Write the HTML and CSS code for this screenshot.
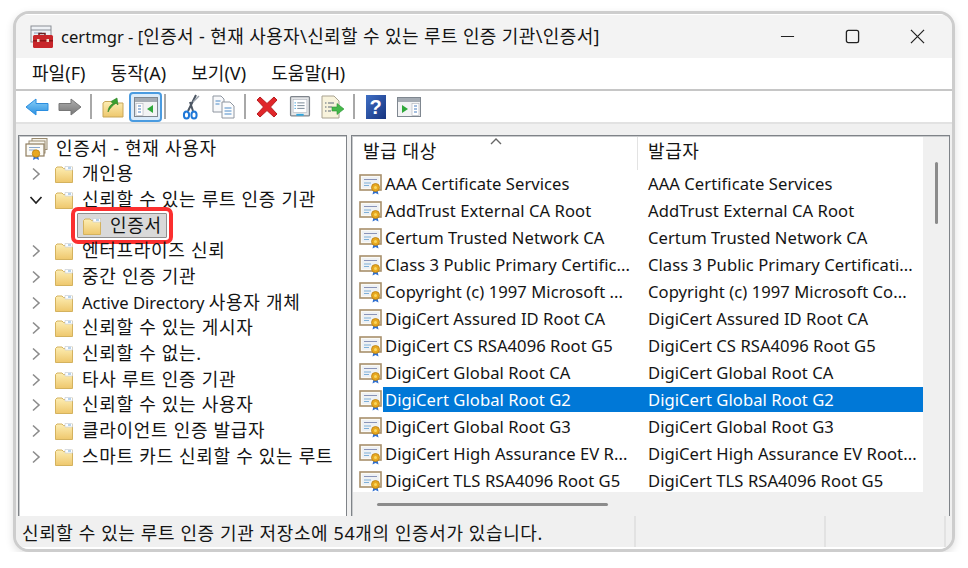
FILE: index.html
```html
<!DOCTYPE html>
<html>

<head lang="ko">
    <meta charset="UTF-8">
    <title>certmgr</title>
    <link rel="stylesheet" href="styles.css">
</head>

<body>
    <!-- 아이콘 모음 -->
    <svg class="icon-defs" xmlns="http://www.w3.org/2000/svg">
        <defs>
            <linearGradient id="folderFill" x1="0" y1="0" x2="0" y2="1">
                <stop offset="0" stop-color="#fdeeb4" />
                <stop offset="1" stop-color="#eec76c" />
            </linearGradient>
            <linearGradient id="backFill" x1="0" y1="0" x2="0" y2="1">
                <stop offset="0" stop-color="#8ad0f8" />
                <stop offset="1" stop-color="#2a8fe0" />
            </linearGradient>
            <linearGradient id="fwdFill" x1="0" y1="0" x2="0" y2="1">
                <stop offset="0" stop-color="#b0b0b0" />
                <stop offset="1" stop-color="#757575" />
            </linearGradient>
            <linearGradient id="helpFill" x1="0" y1="0" x2="1" y2="1">
                <stop offset="0" stop-color="#3f6fc4" />
                <stop offset="1" stop-color="#16337f" />
            </linearGradient>
            <symbol id="folder" viewBox="0 0 20 20">
                <path d="M1.500 18.500V4.500L3 3h5l1.500 1.500h7L18.500 3v15.500z" fill="url(#folderFill)" stroke="#d4b25e" />
                <path d="M11 2.500h6.500l1 1V6H11z" fill="#fff" stroke="#c9cfd6" stroke-width=".7" />
                <path d="M14 3.500h3v1h-3z" fill="#6ea6d8" />
            </symbol>
            <symbol id="cert" viewBox="0 0 24 22">
                <rect x="1" y="2" width="21" height="15" fill="#fbfaf6" stroke="#a8906c" stroke-width="1.600" />
                <rect x="3" y="4" width="17" height="11" fill="#eef1f4" />
                <path d="M5 6.500h13" stroke="#8a94b8" />
                <path d="M5 10h7M5 12.500h5" stroke="#7fb0d8" />
                <path d="M14.500 17l-1 4.500 3-1.500 3 1.500-1-4.500z" fill="#2f6fd0" />
                <circle cx="16.500" cy="14.500" r="4" fill="#e8a820" stroke="#b97f10" stroke-width=".8" />
                <circle cx="16.500" cy="14.500" r="1.500" fill="#f8d860" />
            </symbol>
            <symbol id="certs" viewBox="0 0 24 24">
                <rect x="7" y="1.500" width="15" height="11" fill="#f6f3ea" stroke="#9a8b70" />
                <rect x="4" y="4" width="16" height="12" fill="#f8f6ef" stroke="#9a8b70" />
                <rect x="1" y="7" width="18" height="12" fill="#fbfaf6" stroke="#8f7d5f" stroke-width="1.200" />
                <path d="M4 10.500h11M4 13h6" stroke="#8aa8cc" />
                <path d="M9 18l-1 5 3-1.500 3 1.500-1-5z" fill="#2f6fd0" />
                <circle cx="11" cy="16.500" r="3.700" fill="#e8a820" stroke="#b97f10" stroke-width=".8" />
            </symbol>
            <symbol id="toolbox" viewBox="0 0 24 24">
                <rect x="1" y="1" width="20" height="16" fill="#eef1f5" stroke="#8b8f96" />
                <path d="M1 5h20" stroke="#8b8f96" />
                <path d="M4 8h8M4 11h5" stroke="#8aa0bc" />
                <path d="M9 10V8.500h6V10" fill="none" stroke="#6a2020" stroke-width="1.500" />
                <rect x="3" y="10" width="20" height="13" rx="1.500" fill="#c8262a" />
                <rect x="3" y="15" width="20" height="1.500" fill="#8e1416" />
                <rect x="7" y="14" width="2.500" height="3" fill="#f0d8c8" />
                <rect x="16.500" y="14" width="2.500" height="3" fill="#f0d8c8" />
            </symbol>
            <symbol id="back" viewBox="0 0 24 18">
                <path d="M1 9l10-8v4.500h12v7H11V17z" fill="url(#backFill)" stroke="#2a8ee0" stroke-linejoin="round" />
            </symbol>
            <symbol id="fwd" viewBox="0 0 24 18">
                <path d="M23 9l-10-8v4.500H1v7h12V17z" fill="url(#fwdFill)" stroke="#777" stroke-linejoin="round" />
            </symbol>
            <symbol id="upFolder" viewBox="0 0 22 22">
                <path d="M1 21V7l2-1.500h6l1.500 1.500H21v14z" fill="url(#folderFill)" stroke="#c9a758" />
                <path d="M6 16c0-4 2-7 5-8.500L9 5.500 15 2l1 7-2-1.800C11 9 8 12 6 16z" fill="#3aa02e" stroke="#2a8022" stroke-width=".6" />
            </symbol>
            <symbol id="paneHide" viewBox="0 0 24 20">
                <rect x=".5" y=".5" width="23" height="19" fill="#f2f3f4" stroke="#7f8790" />
                <rect x="1" y="1" width="22" height="4" fill="#a4abb3" />
                <rect x="2" y="6.500" width="7" height="12" fill="#fff" stroke="#aab0b8" stroke-width=".6" />
                <path d="M4 9h3M4 12h3M4 15h3" stroke="#4a7fc0" stroke-width="1.200" />
                <path d="M19 8v8l-6-4z" fill="#2fa83a" />
            </symbol>
            <symbol id="paneShow" viewBox="0 0 24 20">
                <rect x=".5" y=".5" width="23" height="19" fill="#f2f3f4" stroke="#7f8790" />
                <rect x="1" y="1" width="22" height="4" fill="#a4abb3" />
                <rect x="15" y="6.500" width="7" height="12" fill="#fff" stroke="#aab0b8" stroke-width=".6" />
                <path d="M17 9h3M17 12h3M17 15h3" stroke="#4a7fc0" stroke-width="1.200" />
                <path d="M5 8v8l6-4z" fill="#2fa83a" />
            </symbol>
            <symbol id="scissors" viewBox="0 0 20 26">
                <path d="M7 17L15 1M12 17L9 8" stroke="#4c5663" stroke-width="2" />
                <path d="M18 2l-6 6" stroke="#9aa2ac" stroke-width="1.500" />
                <ellipse cx="5.500" cy="21" rx="2.600" ry="3.600" fill="none" stroke="#1f78d8" stroke-width="2" />
                <ellipse cx="13" cy="21" rx="2.600" ry="3.600" fill="none" stroke="#1f78d8" stroke-width="2" />
            </symbol>
            <symbol id="copy" viewBox="0 0 24 24">
                <path d="M1 1h8l3 3v13H1z" fill="#f7f8fa" stroke="#8f96a0" />
                <path d="M10 7h8l4 4v12H10z" fill="#fbfcfd" stroke="#8f96a0" />
                <path d="M3.500 6h5M3.500 9h4M12.500 13h7M12.500 16h7M12.500 19h7" stroke="#4a8ac8" />
            </symbol>
            <symbol id="remove" viewBox="0 0 24 24">
                <path d="M2 5l3-3 7 6.500L19 2l3 3-6.500 7 6.500 7-3 3-7-6.500L5 22l-3-3 6.500-7z" fill="#e0262a" stroke="#b81c20" stroke-linejoin="round" />
            </symbol>
            <symbol id="props" viewBox="0 0 22 24">
                <rect x=".7" y=".7" width="20.600" height="21" rx="1" fill="#e4e6e8" stroke="#7f858c" stroke-width="1.400" />
                <rect x="3.500" y="4" width="15" height="14" fill="#fff" stroke="#aab0b8" stroke-width=".6" />
                <path d="M8 7.500h8M8 10.500h8M8 13.500h8" stroke="#70808e" />
                <path d="M5 7.500h1.500M5 10.500h1.500M5 13.500h1.500" stroke="#2f9ad8" />
                <rect x="7" y="19.500" width="8" height="2" fill="#2fa8e0" />
            </symbol>
            <symbol id="export" viewBox="0 0 24 24">
                <path d="M1 1h12l5 5v17H1z" fill="#f8f3dc" stroke="#a8a290" />
                <path d="M4 8h1.500M7 8h6M4 12h1.500M7 12h4M4 16h1.500M7 16h3" stroke="#5a6678" />
                <path d="M11 12h5V8.500l7 5.500-7 5.500V16h-5z" fill="#45b84a" stroke="#2c9434" stroke-width=".6" />
            </symbol>
            <symbol id="chevRight" viewBox="0 0 12 14">
                <path d="M3 1.500L9 7l-6 5.500" fill="none" stroke="#8c8c8c" stroke-width="1.600" />
            </symbol>
            <symbol id="chevDown" viewBox="0 0 14 12">
                <path d="M1.500 3L7 9l5.500-6" fill="none" stroke="#222" stroke-width="1.700" />
            </symbol>
        </defs>
    </svg>

    <div class="window">
        <div class="titlebar">
            <svg class="title-icon"><use href="#toolbox" /></svg>
            <span class="title-text"><span class="en">certmgr - [</span>인증서 - 현재 사용자\신뢰할 수 있는 루트 인증 기관\인증서]</span>
            <div class="win-btns">
                <svg class="win-btn" viewBox="0 0 16 16"><path d="M1 8h14" stroke="#222" stroke-width="1.300" /></svg>
                <svg class="win-btn" viewBox="0 0 16 16"><rect x="1.500" y="1.500" width="13" height="13" rx="2" fill="none" stroke="#222" stroke-width="1.400" /></svg>
                <svg class="win-btn" viewBox="0 0 16 16"><path d="M1 1l14 14M15 1L1 15" stroke="#222" stroke-width="1.300" /></svg>
            </div>
        </div>

        <div class="menubar">
            <span>파일(F)</span>
            <span>동작(A)</span>
            <span>보기(V)</span>
            <span>도움말(H)</span>
        </div>

        <div class="toolbar">
            <div class="tool"><svg class="ico-arrow"><use href="#back" /></svg></div>
            <div class="tool"><svg class="ico-arrow"><use href="#fwd" /></svg></div>
            <i class="tool-sep"></i>
            <div class="tool"><svg class="ico-22"><use href="#upFolder" /></svg></div>
            <div class="tool tool-on"><svg class="ico-pane"><use href="#paneHide" /></svg></div>
            <i class="tool-sep tool-sep-tight"></i>
            <div class="tool"><svg class="ico-cut"><use href="#scissors" /></svg></div>
            <div class="tool"><svg class="ico-24"><use href="#copy" /></svg></div>
            <i class="tool-sep"></i>
            <div class="tool"><svg class="ico-24"><use href="#remove" /></svg></div>
            <div class="tool"><svg class="ico-22"><use href="#props" /></svg></div>
            <div class="tool"><svg class="ico-24"><use href="#export" /></svg></div>
            <i class="tool-sep"></i>
            <div class="tool">
                <svg class="ico-help" viewBox="0 0 20 24">
                    <rect width="20" height="24" fill="url(#helpFill)" />
                    <text x="10" y="19" text-anchor="middle" class="help-mark">?</text>
                </svg>
            </div>
            <div class="tool"><svg class="ico-pane"><use href="#paneShow" /></svg></div>
        </div>

        <div class="main">
            <div class="panel tree">
                <div class="tree-root">
                    <svg class="ico-certs"><use href="#certs" /></svg>
                    <span>인증서 - 현재 사용자</span>
                </div>
                <div class="tree-row">
                    <svg class="chev"><use href="#chevRight" /></svg>
                    <svg class="ico-folder"><use href="#folder" /></svg>
                    <span>개인용</span>
                </div>
                <div class="tree-row">
                    <svg class="chev"><use href="#chevDown" /></svg>
                    <svg class="ico-folder"><use href="#folder" /></svg>
                    <span>신뢰할 수 있는 루트 인증 기관</span>
                </div>
                <div class="tree-child">
                    <div class="tree-selected">
                        <svg class="ico-folder"><use href="#folder" /></svg>
                        <span>인증서</span>
                    </div>
                </div>
                <div class="tree-row">
                    <svg class="chev"><use href="#chevRight" /></svg>
                    <svg class="ico-folder"><use href="#folder" /></svg>
                    <span>엔터프라이즈 신뢰</span>
                </div>
                <div class="tree-row">
                    <svg class="chev"><use href="#chevRight" /></svg>
                    <svg class="ico-folder"><use href="#folder" /></svg>
                    <span>중간 인증 기관</span>
                </div>
                <div class="tree-row">
                    <svg class="chev"><use href="#chevRight" /></svg>
                    <svg class="ico-folder"><use href="#folder" /></svg>
                    <span><span class="en">Active Directory </span>사용자 개체</span>
                </div>
                <div class="tree-row">
                    <svg class="chev"><use href="#chevRight" /></svg>
                    <svg class="ico-folder"><use href="#folder" /></svg>
                    <span>신뢰할 수 있는 게시자</span>
                </div>
                <div class="tree-row">
                    <svg class="chev"><use href="#chevRight" /></svg>
                    <svg class="ico-folder"><use href="#folder" /></svg>
                    <span>신뢰할 수 없는.</span>
                </div>
                <div class="tree-row">
                    <svg class="chev"><use href="#chevRight" /></svg>
                    <svg class="ico-folder"><use href="#folder" /></svg>
                    <span>타사 루트 인증 기관</span>
                </div>
                <div class="tree-row">
                    <svg class="chev"><use href="#chevRight" /></svg>
                    <svg class="ico-folder"><use href="#folder" /></svg>
                    <span>신뢰할 수 있는 사용자</span>
                </div>
                <div class="tree-row">
                    <svg class="chev"><use href="#chevRight" /></svg>
                    <svg class="ico-folder"><use href="#folder" /></svg>
                    <span>클라이언트 인증 발급자</span>
                </div>
                <div class="tree-row">
                    <svg class="chev"><use href="#chevRight" /></svg>
                    <svg class="ico-folder"><use href="#folder" /></svg>
                    <span>스마트 카드 신뢰할 수 있는 루트</span>
                </div>
            </div>

            <div class="panel list">
                <div class="list-top">
                    <div class="list-body">
                        <div class="list-head">
                            <div class="head-name"><span class="head-label">발급 대상</span><svg class="sort-mark" viewBox="0 0 12 7"><path d="M1 6l5-5 5 5" fill="none" stroke="#666" stroke-width="1.400" /></svg></div>
                            <div class="head-issuer"><span class="head-label">발급자</span></div>
                        </div>
                        <div class="list-rows" id="rows"></div>
                    </div>
                    <div class="vscroll"><div class="vthumb"></div></div>
                </div>
                <div class="hscroll"><div class="hthumb"></div></div>
            </div>
        </div>

        <div class="statusbar">
            <div class="status-main">신뢰할 수 있는 루트 인증 기관 저장소에 54개의 인증서가 있습니다.</div>
            <div class="status-mid"></div>
            <div class="status-end"></div>
        </div>
    </div>

    <script>
        // 인증서 목록
        var certs = [
            ['AAA Certificate Services', 'AAA Certificate Services'],
            ['AddTrust External CA Root', 'AddTrust External CA Root'],
            ['Certum Trusted Network CA', 'Certum Trusted Network CA'],
            ['Class 3 Public Primary Certific...', 'Class 3 Public Primary Certificati...'],
            ['Copyright (c) 1997 Microsoft ...', 'Copyright (c) 1997 Microsoft Co...'],
            ['DigiCert Assured ID Root CA', 'DigiCert Assured ID Root CA'],
            ['DigiCert CS RSA4096 Root G5', 'DigiCert CS RSA4096 Root G5'],
            ['DigiCert Global Root CA', 'DigiCert Global Root CA'],
            ['DigiCert Global Root G2', 'DigiCert Global Root G2'],
            ['DigiCert Global Root G3', 'DigiCert Global Root G3'],
            ['DigiCert High Assurance EV R...', 'DigiCert High Assurance EV Root...'],
            ['DigiCert TLS RSA4096 Root G5', 'DigiCert TLS RSA4096 Root G5']
        ];
        var rows = document.querySelector('#rows');
        certs.forEach(function (c, i) {
            var row = document.createElement('div');
            row.className = 'list-row';
            row.innerHTML = '<svg class="ico-cert"><use href="#cert" /></svg>' +
                '<div class="cells' + (i === 8 ? ' cells-on' : '') + '">' +
                '<span class="cell-name">' + c[0] + '</span>' +
                '<span class="cell-issuer">' + c[1] + '</span></div>';
            rows.appendChild(row);
        });
    </script>
</body>

</html>
```

FILE: styles.css
```css
* {
    padding: 0;
    margin: 0;
    box-sizing: border-box;
}

body {
    background: #ffffff;
    font-family: "Noto Sans", "Noto Sans CJK KR", sans-serif;
    font-size: 18px;
    letter-spacing: .6px;
    color: #141414;
    overflow: hidden;
}

.en {
    font-size: 16.6px;
    letter-spacing: 0;
}

svg {
    display: block;
    flex: none;
}

.icon-defs {
    width: 0;
    height: 0;
}

.window {
    width: 942px;
    height: 541px;
    margin: 11px 0 0 13px;
    display: flex;
    flex-direction: column;
    background: #f0f0f0;
    border: 3px solid #cdcdcd;
    border-radius: 16px;
    box-shadow: 0 3px 8px rgba(0, 0, 0, .12);
    overflow: hidden;
}

.titlebar {
    height: 44px;
    display: flex;
    align-items: center;
    padding-left: 14px;
    background: #f3f3f3;
    border-top: 1px solid #ffffff;
}

.title-icon {
    width: 24px;
    height: 24px;
}

.title-text {
    margin-left: 7px;
    margin-bottom: 4px;
    white-space: nowrap;
    letter-spacing: .38px;
}

.win-btns {
    margin-left: auto;
    display: flex;
    margin-right: 27px;
    gap: 50px;
}

.win-btn {
    width: 15px;
    height: 15px;
}

.menubar {
    height: 33px;
    display: flex;
    align-items: center;
    gap: 25px;
    padding-left: 16px;
    background: #ffffff;
    border-bottom: 2px solid #c6c6c6;
    letter-spacing: .05px;
}

.menubar span {
    margin-bottom: 4px;
}

.toolbar {
    height: 31px;
    display: flex;
    align-items: center;
    padding-left: 4px;
    background: #ffffff;
}

.tool {
    width: 33px;
    height: 30px;
    display: flex;
    align-items: center;
    justify-content: center;
    border-radius: 4px;
}

.tool-on {
    background: #dcecfa;
    border: 2px solid #4a9be0;
}

.tool-sep {
    width: 2px;
    height: 25px;
    margin: 0 4px;
    background: #a8a8a8;
}

.tool-sep-tight {
    margin: 0 8px 0 2px;
}

.ico-arrow {
    width: 24px;
    height: 18px;
}

.ico-22 {
    width: 22px;
    height: 22px;
}

.ico-24 {
    width: 24px;
    height: 24px;
}

.ico-pane {
    width: 24px;
    height: 20px;
}

.ico-cut {
    width: 20px;
    height: 26px;
}

.ico-help {
    width: 20px;
    height: 24px;
}

.help-mark {
    font-family: "Liberation Sans", sans-serif;
    font-weight: 700;
    font-size: 20px;
    fill: #ffffff;
}

.main {
    height: 394px;
    padding: 11px 2px 0 2px;
    display: flex;
    gap: 4px;
    background: #f0f0f0;
    border-top: 2px solid #e2e2e2;
}

.panel {
    height: 383px;
    background: #ffffff;
    border: 1px solid #7f8388;
    box-shadow: inset 1px 1px 0 #c8cacc;
}

.tree {
    width: 329px;
    flex: none;
    overflow: hidden;
    letter-spacing: .7px;
}

.tree-root,
.tree-row,
.tree-child {
    height: 25.67px;
    display: flex;
    align-items: center;
    white-space: nowrap;
}

/* CJK 글꼴이 아래로 처져서 글자만 살짝 올림 */
.tree-root > span,
.tree-row > span,
.tree-selected > span {
    margin-bottom: 4px;
}

.tree-root {
    padding-left: 6px;
    gap: 7px;
}

.ico-certs {
    width: 24px;
    height: 24px;
}

.tree-row {
    padding-left: 10px;
}

.chev {
    width: 14px;
    height: 14px;
}

.ico-folder {
    width: 20px;
    height: 20px;
    margin-left: 11px;
    margin-right: 8px;
}

.tree-child {
    padding-left: 58px;
}

.tree-selected {
    width: 90px;
    height: 25px;
    display: flex;
    align-items: center;
    background: #d9d9d9;
    border: 1px solid #8f8f8f;
    border-radius: 1px;
    outline: 4px solid #fb2f2f;
    outline-offset: 2px;
}

.tree-selected .ico-folder {
    margin-left: 4px;
}

.list {
    flex: 1;
    display: flex;
    flex-direction: column;
    padding: 1px 0 0 1px;
}

.list-top {
    flex: 1;
    min-height: 0;
    display: flex;
}

.list-body {
    flex: 1;
    min-width: 0;
}

.list-head {
    height: 33px;
    display: flex;
    align-items: center;
}

.head-label {
    margin-bottom: 7px;
}

.head-name {
    position: relative;
    width: 285px;
    height: 100%;
    display: flex;
    align-items: center;
    padding-left: 10px;
    border-right: 1px solid #e3e3e3;
}

.sort-mark {
    position: absolute;
    left: 137px;
    top: 1px;
    width: 12px;
    height: 7px;
}

.head-issuer {
    display: flex;
    align-items: center;
    height: 100%;
    padding-left: 10px;
}

.list-rows {
    height: 323px;
    overflow: hidden;
    font-size: 16.6px;
    letter-spacing: .05px;
}

.list-row {
    height: 27px;
    display: flex;
    align-items: center;
    padding-left: 6px;
}

.ico-cert {
    width: 24px;
    height: 22px;
}

.cells {
    flex: 1;
    height: 25px;
    display: flex;
    align-items: center;
    white-space: nowrap;
}

.cells-on {
    background: #0078d7;
    color: #ffffff;
}

.cell-name {
    width: 265px;
    padding-left: 2px;
    flex: none;
}

.vscroll {
    width: 26px;
    flex: none;
    display: flex;
    justify-content: center;
    padding-top: 25px;
    background: #f0f0f0;
}

.vthumb {
    width: 3px;
    height: 62px;
    border-radius: 2px;
    background: #8b8b8b;
}

.hscroll {
    height: 25px;
    flex: none;
    padding: 11px 0 0 24px;
    background: #f0f0f0;
}

.hthumb {
    width: 231px;
    height: 3px;
    border-radius: 2px;
    background: #8b8b8b;
}

.statusbar {
    flex: 1;
    display: flex;
    background: #f0f0f0;
    border-bottom: 2px solid #ffffff;
}

.status-main,
.status-mid,
.status-end {
    display: flex;
    align-items: center;
    white-space: nowrap;
    border-right: 2px solid #e2e2e2;
}

.status-main {
    width: 620px;
    padding-left: 6px;
}

.status-mid {
    width: 190px;
}

.status-end {
    width: 120px;
}
```
